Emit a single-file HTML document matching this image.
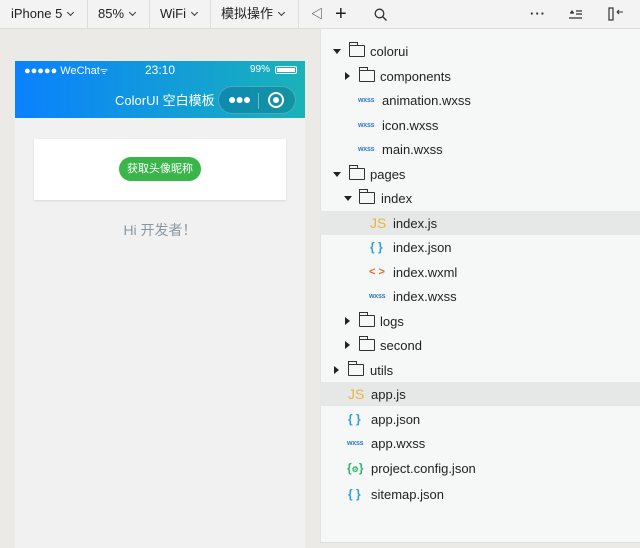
<!DOCTYPE html><html><head><meta charset="utf-8"><style>
*{margin:0;padding:0;box-sizing:border-box}
body{width:640px;height:548px;overflow:hidden;background:#eceae7;font-family:"Liberation Sans","Noto Sans CJK SC",sans-serif;position:relative;color:#222}
.tb{position:absolute;left:0;top:0;width:640px;height:29px;background:#f3f3f3;border-bottom:1px solid #dcdcdc}
.tb .it{position:absolute;top:0;height:28px;line-height:28px;font-size:13px;color:#222}
.sep{position:absolute;top:0;width:1px;height:28px;background:#dcdcdc}
.chev{display:inline-block;width:5px;height:5px;border-right:1.5px solid #333;border-bottom:1.5px solid #333;transform:rotate(45deg);margin-left:6px;vertical-align:3px}
.sim{position:absolute;left:0;top:29px;width:320px;height:519px;background:#eceae7}
.phone{position:absolute;left:15px;top:61px;width:290px;height:487px;background:#f1f1f1}
.nav{position:absolute;left:15px;top:61px;width:290px;height:57px;background:linear-gradient(90deg,#0a81ff,#19b3b8);color:#fff}
.panel{position:absolute;left:320px;top:29px;width:320px;height:514px;background:#f6f7f7;border-left:1px solid #e2e2e2}
.row{position:absolute;left:320px;width:320px;height:24px;font-size:13px;line-height:25px}
.row span{position:absolute;top:0}
.hl{background:#e6e7e7}
.ar{position:absolute;width:0;height:0}
.ar.r{border-top:4px solid transparent;border-bottom:4px solid transparent;border-left:5px solid #222;top:8px}
.ar.d{border-left:4px solid transparent;border-right:4px solid transparent;border-top:5px solid #222;top:10px}
.fd{position:absolute;top:6px;width:16px;height:12px;border:1.3px solid #333;border-radius:1px}
.fd:before{content:"";position:absolute;left:-1px;top:-4px;width:7px;height:3px;border:1.3px solid #333;border-bottom:none}
.w{font-size:7px;font-weight:bold;color:#2a7ac9;letter-spacing:-.2px}
.js{font-size:14px;color:#e8b53c}
.br{font-size:12px;color:#2a9fd6;font-weight:bold}
.xm{font-size:11px;color:#e8692a;font-weight:bold}
</style></head><body>
<div class="tb">
<div class="it" style="left:11px">iPhone 5<i class="chev"></i></div>
<div class="sep" style="left:87px"></div>
<div class="it" style="left:98px">85%<i class="chev"></i></div>
<div class="sep" style="left:149px"></div>
<div class="it" style="left:160px">WiFi<i class="chev"></i></div>
<div class="sep" style="left:210px"></div>
<div class="it" style="left:221px">模拟操作<i class="chev"></i></div>
<div class="sep" style="left:298px"></div>
<div class="it" style="left:311px;font-size:12px">◁</div>
<div class="it" style="left:335px;font-size:20px;font-weight:300">+</div>
<svg style="position:absolute;left:374px;top:8px" width="14" height="14"><circle cx="5.5" cy="5.5" r="4.3" fill="none" stroke="#333" stroke-width="1.3"/><line x1="8.5" y1="8.5" x2="12.5" y2="12.5" stroke="#333" stroke-width="1.4"/></svg>
<div class="it" style="left:530px;font-weight:bold;letter-spacing:1px">···</div>
<svg style="position:absolute;left:569px;top:9px" width="14" height="10"><path d="M1 4h4M0 9h13M7 2h6M7 5h6" stroke="#333" stroke-width="1.2"/><path d="M3 1l2 3H1z" fill="#333"/></svg>
<svg style="position:absolute;left:608px;top:7px" width="16" height="14"><rect x="1" y="1" width="4" height="12" fill="none" stroke="#333" stroke-width="1.2"/><path d="M9 5h6M9 5l2-2M9 5l2 2" stroke="#333" stroke-width="1.1" fill="none"/></svg>
</div>
<div class="sim"></div>
<div class="phone"></div>
<div class="nav">
<div style="position:absolute;left:9px;top:3px;font-size:11px">●●●●● WeChat<span style="font-size:9px">ᯤ</span></div>
<div style="position:absolute;left:130px;top:2px;font-size:12px">23:10</div>
<div style="position:absolute;left:235px;top:3px;font-size:10px">99%</div>
<div style="position:absolute;left:260px;top:5px;width:22px;height:8px;border:1px solid #fff;border-radius:2px;padding:1px"><div style="background:#fff;height:100%"></div></div>
<div style="position:absolute;left:100px;top:29px;font-size:13px">ColorUI 空白模板</div>
<div style="position:absolute;left:203px;top:25px;width:78px;height:28px;border-radius:14px;background:rgba(0,60,90,.25);border:1px solid rgba(255,255,255,.25)">
<div style="position:absolute;left:9px;top:4px;font-size:14px;font-weight:bold;letter-spacing:-1px">●●●</div>
<div style="position:absolute;left:39px;top:6px;width:1px;height:16px;background:rgba(255,255,255,.4)"></div>
<div style="position:absolute;left:49px;top:5px;width:16px;height:16px;border:2px solid #fff;border-radius:50%"><div style="position:absolute;left:3px;top:3px;width:6px;height:6px;background:#fff;border-radius:50%"></div></div>
</div></div>
<div style="position:absolute;left:34px;top:139px;width:252px;height:61px;background:#fff;box-shadow:0 1px 2px rgba(0,0,0,.1)"></div>
<div style="position:absolute;left:119px;top:157px;width:82px;height:24px;border-radius:12px;background:#39b54a;color:#fff;font-size:11px;line-height:24px;text-align:center">获取头像昵称</div>
<div style="position:absolute;left:0;width:320px;top:220px;text-align:center;font-size:14px;color:#8799a3">Hi 开发者！</div>
<div class="panel"></div>
<div style="position:absolute;left:320px;top:542px;width:320px;height:1px;background:#ddd"></div>
<div class="row" style="top:39px"><i class="ar d" style="left:13px"></i><i class="fd" style="left:29px"></i><span style="left:50px">colorui</span></div>
<div class="row" style="top:64px"><i class="ar r" style="left:25px"></i><i class="fd" style="left:39px"></i><span style="left:60px">components</span></div>
<div class="row" style="top:88px"><span class="w" style="left:38px">wxss</span><span style="left:62px">animation.wxss</span></div>
<div class="row" style="top:113px"><span class="w" style="left:38px">wxss</span><span style="left:62px">icon.wxss</span></div>
<div class="row" style="top:137px"><span class="w" style="left:38px">wxss</span><span style="left:62px">main.wxss</span></div>
<div class="row" style="top:162px"><i class="ar d" style="left:13px"></i><i class="fd" style="left:29px"></i><span style="left:50px">pages</span></div>
<div class="row" style="top:186px"><i class="ar d" style="left:24px"></i><i class="fd" style="left:39px"></i><span style="left:61px">index</span></div>
<div class="row hl" style="top:211px"><span class="js" style="left:50px">JS</span><span style="left:73px">index.js</span></div>
<div class="row" style="top:235px"><span class="br" style="left:50px">{ }</span><span style="left:73px">index.json</span></div>
<div class="row" style="top:260px"><span class="xm" style="left:49px">&lt; &gt;</span><span style="left:73px">index.wxml</span></div>
<div class="row" style="top:284px"><span class="w" style="left:49px">wxss</span><span style="left:73px">index.wxss</span></div>
<div class="row" style="top:309px"><i class="ar r" style="left:25px"></i><i class="fd" style="left:39px"></i><span style="left:60px">logs</span></div>
<div class="row" style="top:333px"><i class="ar r" style="left:25px"></i><i class="fd" style="left:39px"></i><span style="left:60px">second</span></div>
<div class="row" style="top:358px"><i class="ar r" style="left:14px"></i><i class="fd" style="left:28px"></i><span style="left:50px">utils</span></div>
<div class="row hl" style="top:382px"><span class="js" style="left:28px">JS</span><span style="left:51px">app.js</span></div>
<div class="row" style="top:407px"><span class="br" style="left:28px">{ }</span><span style="left:51px">app.json</span></div>
<div class="row" style="top:431px"><span class="w" style="left:27px">wxss</span><span style="left:51px">app.wxss</span></div>
<div class="row" style="top:456px"><span class="br" style="left:27px;color:#2bb673">{<span style="position:static;font-size:8px">⚙</span>}</span><span style="left:51px">project.config.json</span></div>
<div class="row" style="top:482px"><span class="br" style="left:28px">{ }</span><span style="left:51px">sitemap.json</span></div>
</body></html>
